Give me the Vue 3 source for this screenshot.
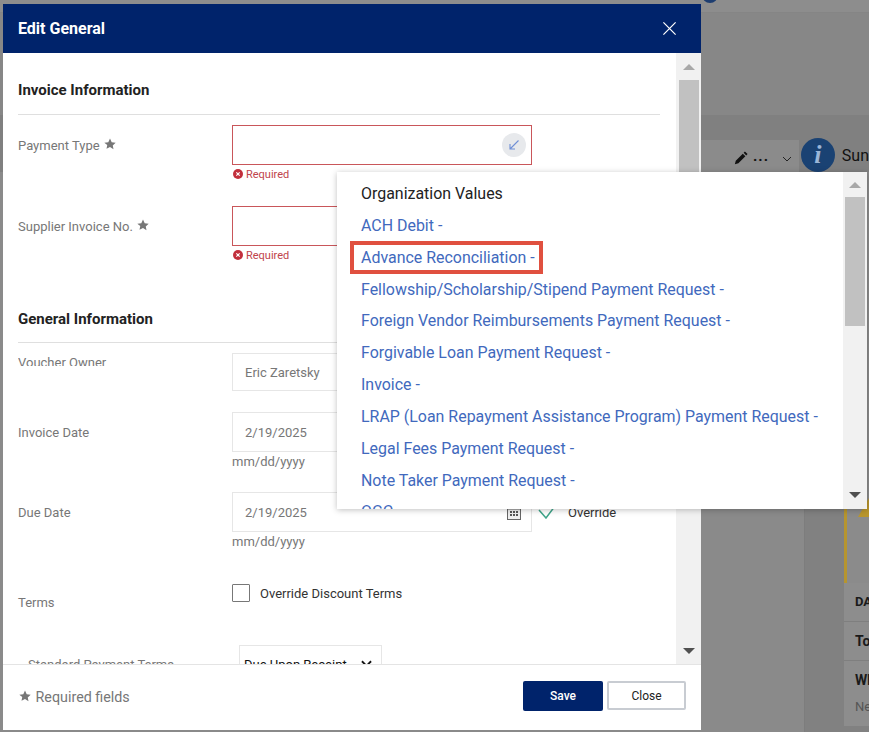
<template>
  <div class="page">
    <!-- page behind the dialog -->
    <div class="bg">
      <div class="bg-top">
        <div class="bg-strip">
          <span class="bg-dot"></span>
        </div>
        <div class="bg-tools">
          <div class="tool-panel">
            <svg class="pencil" viewBox="0 0 16 16"><path d="M1 15l1-4 8-8 3 3-8 8zM11 2l1.500-1.500 3 3L14 5z" fill="#111" /></svg>
            <span class="dots">...</span>
            <svg class="chev" viewBox="0 0 12 12"><path d="M2 4l4 4 4-4" fill="none" stroke="#222" stroke-width="1" /></svg>
          </div>
          <span class="info">i</span>
          <span class="sun">Sun</span>
        </div>
      </div>
      <div class="bg-bottom">
        <div class="bg-mid"></div>
        <div class="bg-right">
          <div class="warn">
            <span class="warn-tri"></span>
          </div>
          <div class="bg-row bold">DA</div>
          <div class="bg-row big">To</div>
          <div class="bg-row big last">Wh<small>Ne</small></div>
        </div>
      </div>
    </div>

    <!-- dialog -->
    <div class="modal">
      <div class="modal-head">
        <span class="modal-title">Edit General</span>
        <svg class="close-x" viewBox="0 0 16 16"><path d="M1.500 1.500l13 13M14.500 1.500l-13 13" fill="none" stroke="#fff" stroke-width="1.300" /></svg>
      </div>

      <div class="modal-body">
        <div class="form">
          <h3 class="section first">Invoice Information</h3>

          <div class="row r-payment">
            <label class="lbl">Payment Type <svg class="star" viewBox="0 0 24 24"><path :d="starPath" /></svg></label>
            <div>
              <div class="field invalid">
                <span class="lookup">
                  <svg viewBox="0 0 12 12"><path d="M10.500 1.500L2 10M2 5v5h5" fill="none" stroke="#6f8fd6" stroke-width="1.100" /></svg>
                </span>
              </div>
              <div class="req">
                <svg viewBox="0 0 12 12"><circle cx="6" cy="6" r="6" fill="#c22f3c" /><path d="M4 4l4 4M8 4l-4 4" stroke="#fff" stroke-width="1.400" /></svg>
                Required
              </div>
            </div>
          </div>

          <div class="row r-supplier">
            <label class="lbl">Supplier Invoice No. <svg class="star" viewBox="0 0 24 24"><path :d="starPath" /></svg></label>
            <div>
              <div class="field invalid"></div>
              <div class="req">
                <svg viewBox="0 0 12 12"><circle cx="6" cy="6" r="6" fill="#c22f3c" /><path d="M4 4l4 4M8 4l-4 4" stroke="#fff" stroke-width="1.400" /></svg>
                Required
              </div>
            </div>
          </div>

          <h3 class="section second">General Information</h3>

          <div class="row r-owner">
            <label class="lbl clipped">Voucher Owner</label>
            <div class="field short">Eric Zaretsky</div>
          </div>

          <div class="row r-invoice">
            <label class="lbl">Invoice Date</label>
            <div>
              <div class="field">2/19/2025</div>
              <div class="hint">mm/dd/yyyy</div>
            </div>
          </div>

          <div class="row r-due">
            <label class="lbl">Due Date</label>
            <div>
              <div class="due-line">
                <div class="field">
                  2/19/2025
                  <svg class="cal" viewBox="0 0 14 14"><path d="M0 1h14v13H0z" fill="#666" /><path d="M1 3.500h12v9.500H1z" fill="#eee" /><path d="M3 5h2v2H3zM6 5h2v2H6zM9 5h2v2H9zM3 8h2v2H3zM6 8h2v2H6zM9 8h2v2H9z" fill="#555" /></svg>
                </div>
                <svg class="check" viewBox="0 0 18 14"><path d="M1 5l7 8 9-12" fill="none" stroke="#3fa58a" stroke-width="1.500" /></svg>
                <span class="dark">Override</span>
              </div>
              <div class="hint">mm/dd/yyyy</div>
            </div>
          </div>

          <div class="row r-terms">
            <label class="lbl terms">Terms</label>
            <div class="chk-line">
              <span class="chk"></span>
              <span class="dark">Override Discount Terms</span>
            </div>
          </div>

          <div class="row r-std">
            <label class="lbl std">Standard Payment Terms</label>
            <div class="select">
              Due Upon Receipt
              <svg viewBox="0 0 12 8"><path d="M1 1l5 5 5-5" fill="none" stroke="#111" stroke-width="2" /></svg>
            </div>
          </div>
        </div>

        <div class="scrollbar">
          <span class="arrow up"></span>
          <span class="thumb"></span>
          <span class="arrow down"></span>
        </div>
      </div>

      <div class="modal-foot">
        <span class="foot-note">
          <svg class="star" viewBox="0 0 24 24"><path :d="starPath" /></svg>
          Required fields
        </span>
        <div class="foot-btns">
          <button class="btn save">Save</button>
          <button class="btn close">Close</button>
        </div>
      </div>
    </div>

    <!-- lookup menu -->
    <div class="menu">
      <ul class="menu-list">
        <li class="menu-title">Organization Values</li>
        <li v-for="item in values" :key="item" class="menu-item">
          <a :class="{ marked: item === marked }">{{ item }} -</a>
        </li>
      </ul>
      <div class="scrollbar menu-bar">
        <span class="arrow up"></span>
        <span class="thumb"></span>
        <span class="arrow down"></span>
      </div>
    </div>
  </div>
</template>

<script setup>
const starPath = "M12 1l3.400 7.300 7.900 1-5.800 5.500 1.500 7.900L12 18l-7 3.700 1.500-7.900L.7 9.300l7.900-1z";

const marked = "Advance Reconciliation";

const values = [
  "ACH Debit",
  "Advance Reconciliation",
  "Fellowship/Scholarship/Stipend Payment Request",
  "Foreign Vendor Reimbursements Payment Request",
  "Forgivable Loan Payment Request",
  "Invoice",
  "LRAP (Loan Repayment Assistance Program) Payment Request",
  "Legal Fees Payment Request",
  "Note Taker Payment Request",
  "OGC",
];
</script>

<style>
html,
body {
  margin: 0;
  background: #8a8a8a;
}
</style>

<style scoped>
.page {
  position: relative;
  width: 869px;
  height: 732px;
  overflow: hidden;
  background: #8a8a8a;
  font-family: Roboto, "Liberation Sans", sans-serif;
  font-size: 13px;
}

/* behind the dialog */
.bg {
  display: flex;
  flex-direction: column;
  height: 100%;
}
.bg-top {
  height: 172px;
  display: flex;
  flex-direction: column;
  justify-content: space-between;
  background: linear-gradient(#878787 0, #878787 115px, #808080 115px);
}
.bg-strip {
  height: 12px;
  padding-left: 702px;
  background: #8d8d8d;
  border-bottom: 1px solid #858585;
}
.bg-dot {
  display: block;
  width: 16px;
  height: 16px;
  margin-top: -13px;
  border-radius: 50%;
  background: #1d3d70;
}
.bg-tools {
  display: flex;
  align-items: flex-end;
  height: 34px;
  margin-left: 701px;
}
.tool-panel {
  display: flex;
  align-items: center;
  width: 102px;
  height: 32px;
  padding-left: 33px;
  box-sizing: border-box;
  background: #8b8b8b;
}
.pencil {
  width: 14px;
  height: 14px;
  margin-top: 4px;
}
.dots {
  margin-left: 5px;
  font-size: 15px;
  font-weight: 700;
  letter-spacing: 1px;
  color: #111;
}
.chev {
  width: 12px;
  height: 12px;
  margin-left: 12px;
  margin-top: 6px;
}
.info {
  width: 34px;
  height: 34px;
  margin-left: 1px;
  margin-right: 0;
  flex: none;
  border-radius: 50%;
  background: #1a4273;
  color: #9bb6d8;
  font-family: "Liberation Serif", serif;
  font-size: 26px;
  font-weight: 700;
  font-style: italic;
  line-height: 34px;
  text-align: center;
  transform: translateX(1px);
}
.sun {
  align-self: center;
  margin-left: 8px;
  font-size: 16px;
  color: #111;
}
.bg-bottom {
  flex: 1;
  display: flex;
}
.bg-mid {
  width: 804px;
  border-right: 1px solid #7d7d7d;
}
.bg-right {
  flex: 1;
  padding-left: 39px;
  overflow: hidden;
  background: #818181;
}
.warn {
  height: 411px;
  border-left: 3px solid #b6952f;
  position: relative;
  box-sizing: border-box;
  background: #8b8b8b;
}
.warn-tri {
  position: absolute;
  left: 11px;
  top: 326px;
  border-left: 11px solid transparent;
  border-right: 11px solid transparent;
  border-bottom: 19px solid #b9962d;
}
.bg-row {
  height: 38px;
  padding-left: 11px;
  background: #8d8d8d;
  border-bottom: 1px solid #7f7f7f;
  color: #1a1a1a;
  line-height: 38px;
  font-weight: 700;
  white-space: nowrap;
}
.bg-row.big {
  font-size: 14px;
}
.bg-row.last {
  height: auto;
  border: 0;
}
.bg-row small {
  display: block;
  margin-top: -11px;
  font-size: 13px;
  font-weight: 400;
  color: #555;
}

/* dialog */
.modal {
  position: absolute;
  left: 3px;
  top: 4px;
  width: 698px;
  height: 726px;
  display: flex;
  flex-direction: column;
  background: #fff;
}
.modal-head {
  height: 49px;
  flex: none;
  display: flex;
  align-items: center;
  justify-content: space-between;
  padding: 0 24px 0 15px;
  background: #00236b;
}
.modal-title {
  color: #fff;
  font-size: 16px;
  font-weight: 700;
}
.close-x {
  width: 15px;
  height: 15px;
}
.modal-body {
  flex: 1;
  display: flex;
  min-height: 0;
  overflow: hidden;
}
.form {
  flex: 1;
  min-width: 0;
  padding: 0 16px 0 15px;
  overflow: hidden;
}
.section {
  margin: 0;
  border-bottom: 1px solid #dfdfdf;
  color: #222;
  font-size: 15px;
  font-weight: 700;
  line-height: 20px;
}
.section.first {
  padding: 27px 0 14px;
}
.section.second {
  padding: 0 0 13px;
  margin-top: 46px;
}
.row {
  display: flex;
  align-items: flex-start;
}
.r-payment {
  margin-top: 10px;
}
.r-supplier {
  margin-top: 24px;
}
.r-owner {
  margin-top: 10px;
}
.r-invoice {
  margin-top: 21px;
}
.r-due {
  margin-top: 22px;
}
.r-terms {
  margin-top: 34px;
}
.r-std {
  margin-top: 34px;
  padding-left: 10px;
}
.lbl {
  width: 214px;
  flex: none;
  padding-top: 13px;
  color: #777;
  line-height: 16px;
  box-sizing: border-box;
}
.lbl.clipped {
  height: 11px;
  padding-top: 0;
  margin-top: 2px;
  overflow: hidden;
}
.lbl.terms {
  padding-top: 11px;
}
.lbl.std {
  width: 211px;
  padding-top: 12px;
}
.star {
  width: 12px;
  height: 12px;
  margin-left: 1px;
  vertical-align: 0;
  fill: #777;
}
.field {
  position: relative;
  width: 300px;
  height: 40px;
  padding-left: 12px;
  box-sizing: border-box;
  border: 1px solid #e6e6e6;
  color: #777;
  line-height: 39px;
}
.field.short {
  height: 38px;
  line-height: 37px;
}
.field.invalid {
  border-color: #c9565a;
}
.lookup {
  position: absolute;
  right: 5px;
  top: 7px;
  width: 24px;
  height: 24px;
  display: flex;
  align-items: center;
  justify-content: center;
  border-radius: 50%;
  background: #e7e9ec;
}
.lookup svg {
  width: 12px;
  height: 12px;
}
.req {
  display: flex;
  align-items: center;
  gap: 3px;
  height: 16px;
  margin-top: 1px;
  padding-left: 1px;
  color: #c0434b;
  font-size: 11px;
}
.req svg {
  width: 10px;
  height: 10px;
}
.hint {
  margin-top: 2px;
  color: #777;
  line-height: 16px;
}
.due-line {
  display: flex;
  align-items: center;
}
.cal {
  position: absolute;
  right: 10px;
  top: 13px;
  width: 14px;
  height: 14px;
}
.check {
  width: 18px;
  height: 14px;
  margin-left: 6px;
}
.dark {
  color: #333;
}
.due-line .dark {
  margin-left: 12px;
}
.chk-line {
  display: flex;
  gap: 10px;
  align-items: center;
}
.chk-line .dark {
  margin-top: 1px;
}
.chk {
  width: 16px;
  height: 16px;
  border: 1px solid #777;
  border-radius: 1px;
}
.select {
  width: 143px;
  height: 40px;
  display: flex;
  align-items: center;
  justify-content: space-between;
  padding: 0 9px 2px 4px;
  box-sizing: border-box;
  border: 1px solid #e6e6e6;
  color: #111;
}
.select svg {
  width: 11px;
  height: 8px;
}

/* scrollbars */
.scrollbar {
  position: relative;
  width: 25px;
  flex: none;
  box-sizing: border-box;
  padding: 27px 2px 0 3px;
  background: #f1f1f1;
}
.thumb {
  display: block;
  height: 232px;
  background: #c1c1c1;
}
.arrow {
  position: absolute;
  left: 7px;
  border-left: 6px solid transparent;
  border-right: 6px solid transparent;
}
.arrow.up {
  top: 11px;
  border-bottom: 6px solid #a8a8a8;
}
.arrow.down {
  bottom: 10px;
  border-top: 6px solid #505050;
}

/* footer */
.modal-foot {
  height: 66px;
  flex: none;
  display: flex;
  align-items: flex-start;
  justify-content: space-between;
  box-sizing: border-box;
  padding: 16px 15px 0 16px;
  border-top: 1px solid #e4e4e4;
}
.foot-note {
  margin-top: 8px;
  color: #777;
  font-size: 14.300px;
}
.foot-note .star {
  margin: 0 1px 0 0;
}
.foot-btns {
  display: flex;
  gap: 4px;
}
.btn {
  height: 30px;
  font-family: inherit;
  font-size: 12px;
  padding: 0;
  box-sizing: border-box;
  border-radius: 2px;
}
.save {
  width: 80px;
  border: 0;
  background: #00236b;
  color: #fff;
  font-weight: 500;
}
.close {
  width: 79px;
  height: 29px;
  border: 2px solid #c8ccd2;
  background: #fff;
  color: #222;
}

/* menu */
.menu {
  position: absolute;
  left: 337px;
  top: 172px;
  width: 530px;
  height: 337px;
  display: flex;
  background: #fff;
  box-shadow: 0 1px 6px rgba(0, 0, 0, 0.25);
  overflow: hidden;
}
.menu-list {
  flex: 1;
  margin: 0;
  padding: 6px 0 0 24px;
  list-style: none;
  font-size: 15.950px;
  line-height: 31.850px;
  white-space: nowrap;
  overflow: hidden;
}
.menu-title {
  color: #222;
}
.menu-item a {
  color: #4169bd;
}
.menu-item a.marked {
  outline: 4px solid #e0503f;
  outline-offset: 1px;
  padding: 2px 3px 2px 6px;
  margin-left: -6px;
}
.menu-bar {
  width: 24px;
  padding: 25px 2px 0 2px;
}
.menu-bar .thumb {
  height: 129px;
}
.menu-bar .arrow {
  left: 6px;
}
.menu-bar .arrow.up {
  top: 10px;
}
.menu-bar .arrow.down {
  bottom: 11px;
}
</style>
